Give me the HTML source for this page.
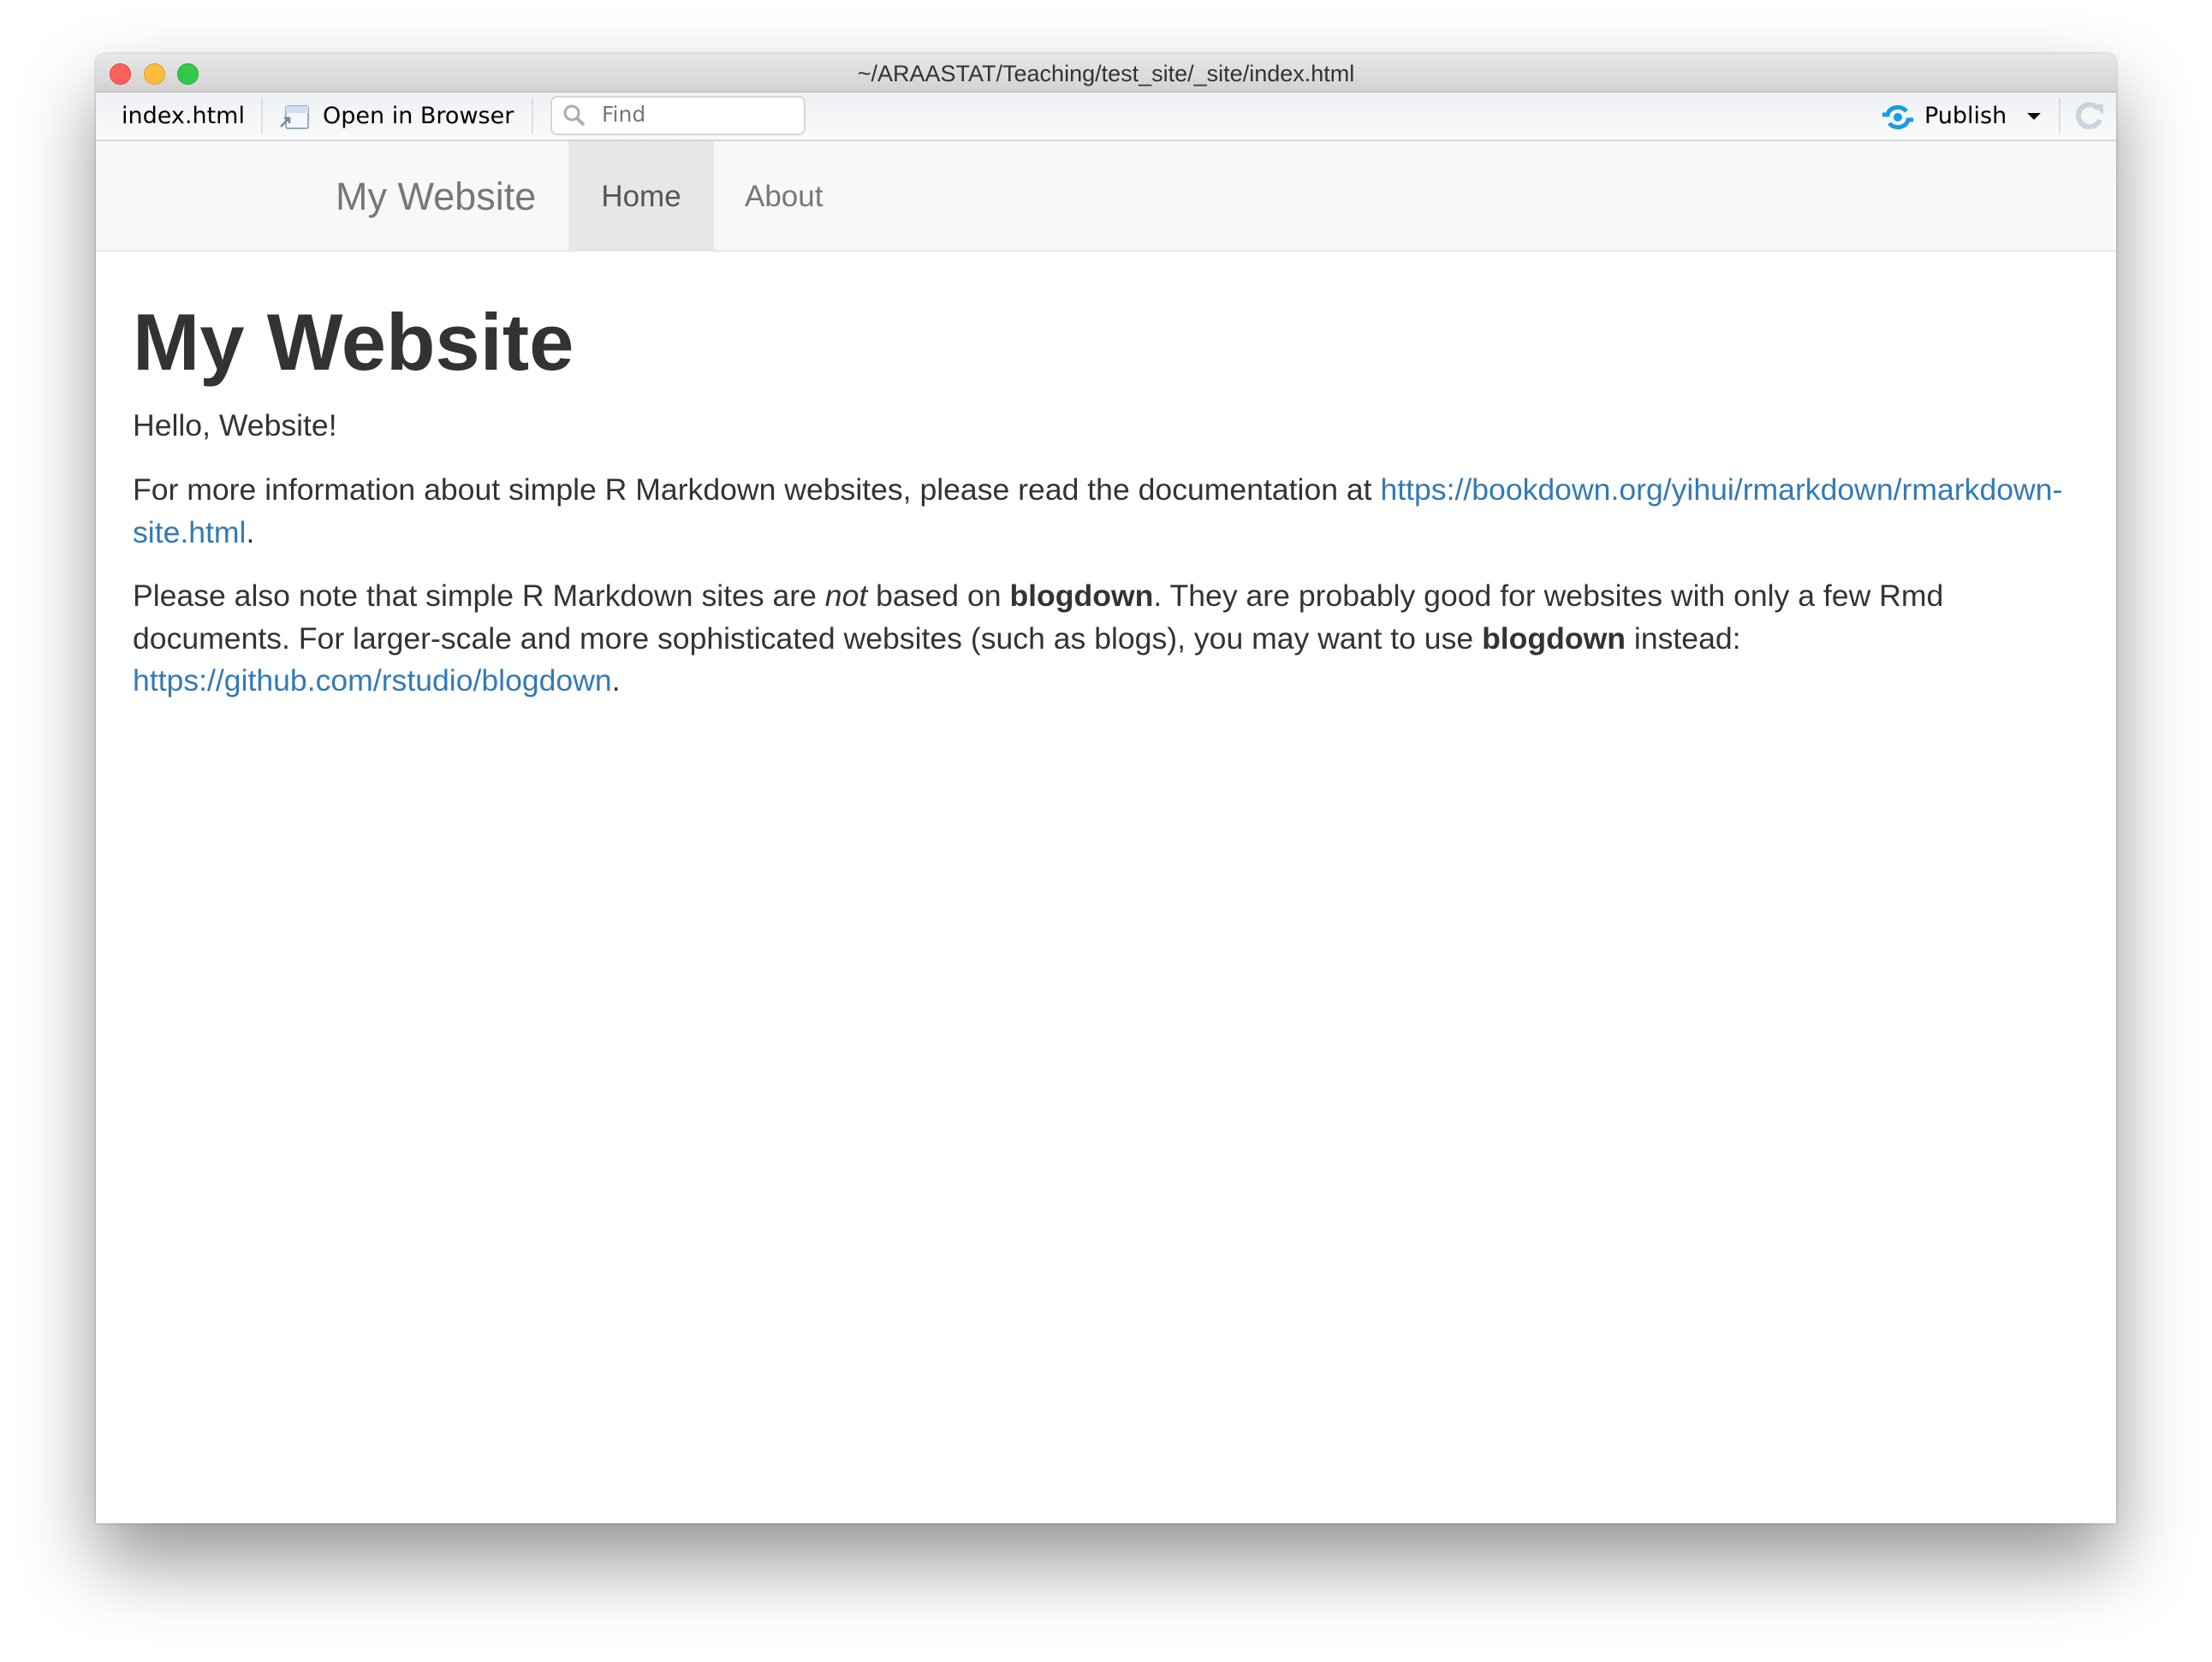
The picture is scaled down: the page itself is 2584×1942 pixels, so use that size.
<!DOCTYPE html>
<html><head><meta charset="utf-8"><style>
html,body{margin:0;padding:0;background:#fff;width:2584px;height:1942px;overflow:hidden;font-family:"Liberation Sans",sans-serif}
.win{position:absolute;left:112px;top:63px;width:2360px;height:1717px;background:#fff;border-radius:10px 10px 0 0;box-shadow:0 45px 90px rgba(0,0,0,.42),0 0 3px rgba(0,0,0,.3);overflow:hidden}
.title{position:absolute;left:0;top:0;width:100%;height:44px;background:linear-gradient(#e9e8e9,#d3d1d3);border-bottom:1px solid #b8b6b8;text-align:center;font-size:27px;line-height:46px;color:#333}
.dot{position:absolute;top:11px;width:23px;height:23px;border-radius:50%}
.tb{position:absolute;left:0;top:45px;width:100%;height:55px;background:linear-gradient(#eef1f4,#f9fafb);border-bottom:2px solid #d5d8db;font-family:"DejaVu Sans",sans-serif;font-size:27px;color:#000}
.tb span{position:absolute;top:12px}
.sep{position:absolute;top:6px;width:2px;height:42px;background:#dcdfe2}
.find{position:absolute;left:531px;top:4px;width:294px;height:42px;border:2px solid #d4d7da;border-radius:8px;background:#fff}
.nav{position:absolute;left:0;top:102px;width:100%;height:127px;background:#f8f8f8;border-bottom:2px solid #e7e7e7}
.nav div{position:absolute;top:0;height:127px;line-height:130px;color:#777}
.content{position:absolute;left:43px;top:0;width:2280px;color:#333;font-size:35.6px;line-height:49.5px}
.content p{position:absolute;left:0;margin:0;width:2300px;white-space:nowrap}
a{color:#337ab7;text-decoration:none}
</style></head><body>
<div class="win">
 <div class="title">~/ARAASTAT/Teaching/test_site/_site/index.html
  <div class="dot" style="left:16px;background:#fc605b;border:1px solid #de4a44"></div>
  <div class="dot" style="left:56px;background:#fdbc40;border:1px solid #dea12f"></div>
  <div class="dot" style="left:95px;background:#34c84a;border:1px solid #27a93a"></div>
 </div>
 <div class="tb">
  <span style="left:30px">index.html</span>
  <div class="sep" style="left:193px"></div>
  <svg style="position:absolute;left:214px;top:12px" width="36" height="32" viewBox="0 0 36 32"><rect x="8" y="4" width="26" height="26" rx="2" fill="#f4f8fc" stroke="#9ab" stroke-width="2"/><rect x="8" y="4" width="26" height="8" fill="#cfe0f3"/><path d="M2 28 L12 18 M6 18 h6 v6" stroke="#789" stroke-width="2.5" fill="none"/></svg>
  <span style="left:265px">Open in Browser</span>
  <div class="sep" style="left:509px"></div>
  <div class="find"><svg style="position:absolute;left:12px;top:7px" width="28" height="28" viewBox="0 0 28 28"><circle cx="11" cy="11" r="8" stroke="#a9aeb3" stroke-width="3" fill="none"/><path d="M17 17 L25 25" stroke="#a9aeb3" stroke-width="4"/></svg><span style="left:58px;top:5px;color:#777;font-size:25px">Find</span></div>
  <svg style="position:absolute;left:2085px;top:12px" width="40" height="34" viewBox="0 0 40 34"><path d="M2 14 h6 a12 10 0 0 1 22 -4" stroke="#1a9be6" stroke-width="5" fill="none"/><path d="M38 20 h-6 a12 10 0 0 1 -22 4" stroke="#1a9be6" stroke-width="5" fill="none"/><circle cx="20" cy="17" r="5" fill="#1a9be6"/></svg>
  <span style="left:2136px">Publish</span>
  <svg style="position:absolute;left:2256px;top:24px" width="16" height="10"><path d="M0 0 H16 L8 8Z" fill="#111"/></svg>
  <div class="sep" style="left:2293px"></div>
  <svg style="position:absolute;left:2311px;top:10px" width="38" height="38" viewBox="0 0 38 38"><path d="M30 22 A13 13 0 1 1 28 9" stroke="#c9d4e0" stroke-width="6" fill="none"/><path d="M22 4 L34 4 L34 16Z" fill="#c9d4e0"/></svg>
 </div>
 <div class="nav">
  <div style="left:280px;font-size:45px">My Website</div>
  <div style="left:552px;width:170px;background:#e7e7e7;color:#555;font-size:35px;text-align:center">Home</div>
  <div style="left:758px;font-size:35px">About</div>
 </div>
 <div style="position:absolute;left:0;top:231px;width:100%;height:1486px">
  <div class="content">
   <p style="top:6px;font-size:94px;line-height:200px;font-weight:bold;color:#333">My Website</p>
   <p style="top:179px">Hello, Website!</p>
   <p style="top:254px">For more information about simple R Markdown websites, please read the documentation at <a>https://bookdown.org/yihui/rmarkdown/rmarkdown-</a><br><a>site.html</a>.</p>
   <p style="top:378px">Please also note that simple R Markdown sites are <i>not</i> based on <b>blogdown</b>. They are probably good for websites with only a few Rmd<br>documents. For larger-scale and more sophisticated websites (such as blogs), you may want to use <b>blogdown</b> instead:<br><a>https://github.com/rstudio/blogdown</a>.</p>
  </div>
 </div>
</div>
</body></html>
